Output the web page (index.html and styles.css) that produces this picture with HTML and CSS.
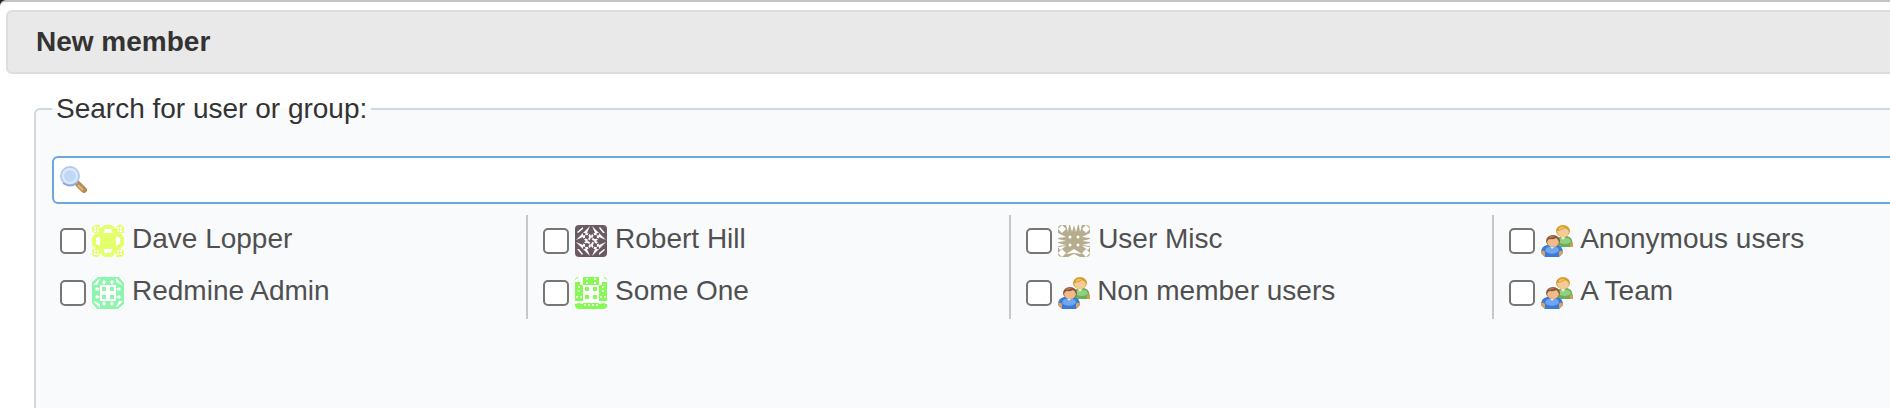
FILE: index.html
```html
<!DOCTYPE html>
<html lang="en">
<head>
    <meta charset="utf-8">
    <title>New member</title>
    <link rel="stylesheet" href="styles.css">
</head>
<body>
    <svg class="defs" aria-hidden="true">
        <symbol id="group" viewBox="0 0 32 32">
            <path d="M14 20l2-5q1-3 5-4h5q4 1 5 4l1 6-3 1H16z" fill="#6cae5a"/>
            <path d="M17 17q1-4 4-4h5q3 0 4 4-6 4-13 0z" fill="#92cf7f"/>
            <path d="M19 11l3 4 3-4z" fill="#e4efd6"/>
            <path d="M29 18h3v4h-3z" fill="#d79b50"/>
            <ellipse cx="22" cy="6" rx="7" ry="6" fill="#d69c2e"/>
            <path d="M16 6q6-1 8-3 3 1 4 4-1 5-6 5t-6-6z" fill="#f3cb96"/>
            <path d="M18 3q3-2 6-1-2 2-6 3z" fill="#f0c65c"/>
            <path d="M0 28q0-7 6-8h10q6 1 6 8l-4 4H4z" fill="#3b7ad8"/>
            <path d="M4 26q1-4 4-4h6q4 0 4 4-3 3-7 3t-7-3z" fill="#6ea6f0"/>
            <path d="M8 20l3 4 4-4z" fill="#dceafc"/>
            <path d="M0 26q3-1 4 1v4q-4-1-4-5zM22 26q-3-1-4 1v4q4-1 4-5z" fill="#e3a054"/>
            <ellipse cx="12" cy="16" rx="7" ry="6" fill="#8c5539"/>
            <path d="M6 17q1-3 3-3 3 1 6-1 2 1 3 4-1 5-6 5t-6-5z" fill="#f0bb8a"/>
            <path d="M8 12q3-2 6-1-2 2-6 2z" fill="#b47a58"/>
        </symbol>
    </svg>
    <div class="dialog">
        <h1 class="dialog-title">New member</h1>
        <form class="dialog-content">
            <fieldset class="box">
                <legend><label for="principal_search">Search for user or group:</label></legend>
                <div class="search">
                    <svg class="search-icon" viewBox="0 0 28 28" aria-hidden="true">
                        <path d="M18 18l6 6" stroke="#b98951" stroke-width="6" stroke-linecap="round"/>
                        <path d="M18 19l5 5" stroke="#dcb98c" stroke-width="2"/>
                        <circle cx="10" cy="10" r="9" fill="#c5dcf7" stroke="#b4cbee" stroke-width="2"/>
                        <circle cx="10" cy="10" r="7" fill="#c0d8f6" stroke="#dceafb" stroke-width="2"/>
                        <path d="M3 17q7 5 14 0" fill="none" stroke="#8eabda" stroke-width="2"/>
                    </svg>
                    <input type="text" id="principal_search" name="q" class="search-input" autocomplete="off">
                </div>
                <div class="principals">
                    <label class="principal">
                        <input type="checkbox" name="user_ids[]" value="1">
                        <svg class="avatar" viewBox="0 0 32 32" aria-hidden="true">
                            <path fill="#fff" d="M0 0h32v32H0z"/>
                            <g fill="#e3ff6b">
                                <path d="M11 8h10l3 3v10l-3 3H11l-3-3V11z"/>
                                <g id="dave">
                                    <path fill-rule="evenodd" d="M2 0h6v8H2L0 6V2zM2 2v2h2V2zM5 2v2h2V2zM2 5v2h2V5zM5 5v2h2V5z"/>
                                    <path d="M8 4l4-4h8l4 4v4l-3 1-2-5h-6l-2 5-5 2V8z"/>
                                </g>
                                <use href="#dave" transform="rotate(90 16 16)"/>
                                <use href="#dave" transform="rotate(180 16 16)"/>
                                <use href="#dave" transform="rotate(270 16 16)"/>
                            </g>
                        </svg>
                        <span>Dave Lopper</span>
                    </label>
                    <label class="principal">
                        <input type="checkbox" name="user_ids[]" value="2">
                        <svg class="avatar" viewBox="0 0 32 32" aria-hidden="true">
                            <path fill="#8df5ad" d="M0 0h32v32H0z"/>
                            <g fill="#fff">
                                <path d="M8 8h16v16H8z"/>
                                <g id="redmine">
                                    <path d="M0 0h6L0 5zM1 8l6-6h1L5 8zM12 3l2 2-2 3-2-3zM20 3l2 2-2 3-2-3z"/>
                                    <path fill="#8df5ad" d="M10 10h4v4h-4z"/>
                                </g>
                                <use href="#redmine" transform="rotate(90 16 16)"/>
                                <use href="#redmine" transform="rotate(180 16 16)"/>
                                <use href="#redmine" transform="rotate(270 16 16)"/>
                            </g>
                        </svg>
                        <span>Redmine Admin</span>
                    </label>
                    <label class="principal">
                        <input type="checkbox" name="user_ids[]" value="3">
                        <svg class="avatar" viewBox="0 0 32 32" aria-hidden="true">
                            <path fill="#6b5a64" d="M0 0h32v32H0z"/>
                            <g fill="#fff">
                                <g id="robert">
                                    <path d="M8 8l7-7-3 7zM24 8l-7-7 3 7zM2 7l6-5v2L3 8z"/>
                                    <circle cx="12" cy="12" r="3" fill="none" stroke="#fff" stroke-width="2" stroke-dasharray="3 1"/>
                                </g>
                                <use href="#robert" transform="rotate(90 16 16)"/>
                                <use href="#robert" transform="rotate(180 16 16)"/>
                                <use href="#robert" transform="rotate(270 16 16)"/>
                            </g>
                        </svg>
                        <span>Robert Hill</span>
                    </label>
                    <label class="principal">
                        <input type="checkbox" name="user_ids[]" value="4">
                        <svg class="avatar" viewBox="0 0 32 32" aria-hidden="true">
                            <path fill="#86f957" d="M0 0h32v32H0z"/>
                            <g fill="#fff">
                                <path d="M8 8h16v16H8zM8 24h16v2H8z"/>
                                <g id="some">
                                    <path d="M4 0h4v8H5V5H0V3z"/>
                                    <circle cx="12" cy="2" r="1"/>
                                    <circle cx="12" cy="6" r="1"/>
                                    <circle cx="4" cy="10" r="1"/>
                                    <circle cx="4" cy="14" r="1"/>
                                    <circle cx="2" cy="20" r="1"/>
                                    <circle cx="6" cy="20" r="1"/>
                                    <circle cx="10" cy="28" r="1"/>
                                    <circle cx="14" cy="28" r="1"/>
                                    <path d="M0 24h8v3l-4-1-4 1z"/>
                                    <path fill="#86f957" d="M10 10h4v4h-4zM10 18h4v4h-4z"/>
                                </g>
                                <use href="#some" transform="translate(32 0) scale(-1 1)"/>
                            </g>
                        </svg>
                        <span>Some One</span>
                    </label>
                    <label class="principal">
                        <input type="checkbox" name="user_ids[]" value="5">
                        <svg class="avatar" viewBox="0 0 32 32" aria-hidden="true">
                            <path fill="#b5ad8e" d="M0 0h32v32H0z"/>
                            <g fill="#fff">
                                <g id="misc">
                                    <path d="M4 0l4 4-4 4-4-4z"/>
                                    <circle cx="12" cy="12" r="1.5"/>
                                </g>
                                <use href="#misc" transform="rotate(90 16 16)"/>
                                <use href="#misc" transform="rotate(180 16 16)"/>
                                <use href="#misc" transform="rotate(270 16 16)"/>
                                <g id="spikes">
                                    <path d="M8 0h3l-1 7zM12 0h4l-2 7z"/>
                                    <path d="M0 8l8 4-8 1zM0 14l8 2-8 1zM0 18l8 2-8 1zM0 22l8-1-6 4z"/>
                                    <path d="M8 29l8-5v4zM10 32l6-3v3z"/>
                                </g>
                                <use href="#spikes" transform="translate(32 0) scale(-1 1)"/>
                            </g>
                        </svg>
                        <span>User Misc</span>
                    </label>
                    <label class="principal">
                        <input type="checkbox" name="user_ids[]" value="6">
                        <svg class="avatar group" aria-hidden="true"><use href="#group"/></svg>
                        <span>Non member users</span>
                    </label>
                    <label class="principal">
                        <input type="checkbox" name="user_ids[]" value="7">
                        <svg class="avatar group" aria-hidden="true"><use href="#group"/></svg>
                        <span>Anonymous users</span>
                    </label>
                    <label class="principal">
                        <input type="checkbox" name="user_ids[]" value="8">
                        <svg class="avatar group" aria-hidden="true"><use href="#group"/></svg>
                        <span>A Team</span>
                    </label>
                </div>
            </fieldset>
        </form>
    </div>
</body>
</html>
```
FILE: styles.css
```css
* {
    padding: 0;
    margin: 0;
    box-sizing: border-box;
}
html {
    overflow: hidden;
}
body {
    font-family: Arial, "Liberation Sans", sans-serif;
    font-size: 28px;
    color: #333;
    background-color: #1c2733;
}
.defs {
    display: none;
}
/* the dialog is wider than the window */
.dialog {
    width: 107%;
    min-height: 100vh;
    padding: 8px 8px 8px 6px;
    background-color: #fff;
    border-top: 2px solid #c4c4c4;
    border-top-left-radius: 6px;
}
.dialog-title {
    padding: 12px 28px;
    font-size: 28px;
    line-height: 36px;
    background-color: #e9e9e9;
    border: 2px solid #ddd;
    border-radius: 6px;
}
.dialog-content {
    padding: 17px 28px;
}
.box {
    min-height: 400px;
    padding: 29px 16px 16px;
    background-color: #f9fafc;
    border: 2px solid #d0d7de;
    border-radius: 6px;
}
.box legend {
    padding: 0 4px;
    line-height: 36px;
}
.search {
    display: flex;
    align-items: center;
    height: 48px;
    padding: 0 6px;
    background-color: #fff;
    border: 2px solid #6aa8dc;
    border-radius: 6px;
}
.search-icon {
    flex: none;
    width: 28px;
    height: 28px;
}
.search-input {
    flex: 1;
    height: 44px;
    padding: 0 6px;
    font: inherit;
    color: inherit;
    background: none;
    border: none;
    outline: none;
}
.principals {
    margin-top: 11px;
    padding: 0 8px;
    columns: 4;
    column-gap: 32px;
    column-rule: 2px solid #c8c8c8;
}
.principal {
    display: flex;
    align-items: center;
    height: 52px;
    color: #505050;
    white-space: nowrap;
}
.principal span {
    padding-bottom: 4px;
}
.principal input {
    appearance: none;
    flex: none;
    width: 26px;
    height: 26px;
    margin-right: 6px;
    background-color: #fff;
    border: 2px solid #767676;
    border-radius: 5px;
}
.avatar {
    flex: none;
    width: 32px;
    height: 32px;
    margin-right: 8px;
    border-radius: 4px;
}
.avatar.group {
    margin-right: 7px;
    border-radius: 0;
}
```
